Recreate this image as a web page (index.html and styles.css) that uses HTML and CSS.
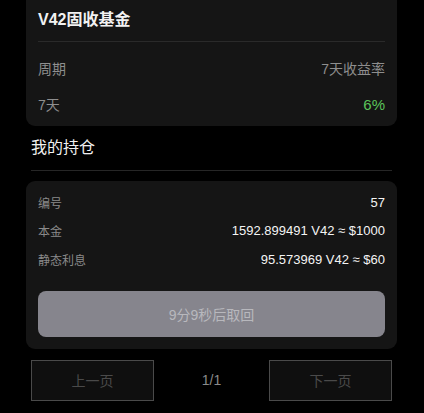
FILE: index.html
```
<!DOCTYPE html>
<html lang="zh">
<head>
<meta charset="utf-8">
<link rel="stylesheet" href="styles.css">
</head>
<body>
<div class="page">
  <section class="card fund">
    <h1 class="fund-title">V42固收基金</h1>
    <div class="fund-rows">
      <div class="row"><span class="muted">周期</span><span class="muted">7天收益率</span></div>
      <div class="row"><span class="muted">7天</span><span class="green">6%</span></div>
    </div>
  </section>

  <h2 class="section-title">我的持仓</h2>

  <section class="card holding">
    <div class="hrow"><span class="hlabel">编号</span><span class="hval">57</span></div>
    <div class="hrow"><span class="hlabel">本金</span><span class="hval">1592.899491 V42 ≈ $1000</span></div>
    <div class="hrow"><span class="hlabel">静态利息</span><span class="hval">95.573969 V42 ≈ $60</span></div>
    <button class="redeem">9分9秒后取回</button>
  </section>

  <nav class="pager">
    <button class="pbtn">上一页</button>
    <span class="pnum">1/1</span>
    <button class="pbtn">下一页</button>
  </nav>
</div>
</body>
</html>
```

FILE: styles.css
```
* { box-sizing: border-box; }
html, body { margin: 0; padding: 0; background: #000; }
body {
  font-family: "Liberation Sans", "Noto Sans CJK SC", sans-serif;
  color: #f0f0f0;
  width: 424px;
  height: 413px;
  overflow: hidden;
}
.page {
  padding: 0 27px 0 26px;
  display: flex;
  flex-direction: column;
}
.card {
  background: #151515;
  border-radius: 9px;
}
.fund {
  border-radius: 0 0 9px 9px;
  padding: 0 12px 4px;
}
.fund-title {
  margin: 0;
  height: 42px;
  line-height: 40px;
  font-size: 16px;
  font-weight: bold;
  color: #f2f2f2;
  border-bottom: 1px solid #2a2a2a;
}
.fund-rows { padding-top: 8px; }
.row {
  height: 36px;
  display: flex;
  justify-content: space-between;
  align-items: center;
  font-size: 14px;
}
.muted { color: #8e8e8e; }
.green { color: #5bc45a; font-size: 15px; }
.section-title {
  margin: 0 5px;
  height: 45px;
  line-height: 44px;
  font-size: 16px;
  font-weight: normal;
  color: #f0f0f0;
  border-bottom: 1px solid #262626;
}
.holding {
  margin-top: 10px;
  padding: 7px 12px 12px;
}
.hrow {
  height: 28.5px;
  display: flex;
  justify-content: space-between;
  align-items: center;
}
.hlabel { font-size: 12px; color: #8a8a8a; }
.hval { font-size: 13px; color: #f4f4f4; }
.redeem {
  margin-top: 17px;
  width: 100%;
  height: 46px;
  border: none;
  border-radius: 8px;
  background: #86858d;
  color: #b8b8bd;
  font-family: inherit;
  font-size: 14px;
}
.pager {
  margin: 11px 5px 0;
  display: flex;
  justify-content: space-between;
  align-items: center;
}
.pbtn {
  width: 123px;
  height: 41px;
  background: #0f0f0f;
  border: 1px solid #4a4a4a;
  color: #4a4a4a;
  font-family: inherit;
  font-size: 14px;
}
.pnum { font-size: 14px; color: #8a8a8a; }
```
